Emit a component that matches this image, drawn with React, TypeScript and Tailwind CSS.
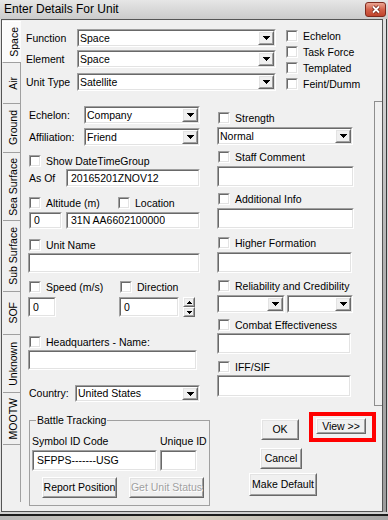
import React from "react"

type BoxProps = { className?: string; children?: React.ReactNode }

// sunken 3d edge, like a classic textbox
function Sunken({ className = "", children }: BoxProps) {
  return (
    <div className={`border border-t-[#a0a0a0] border-l-[#a0a0a0] border-b-white border-r-white ${className}`}>
      <div className="flex h-full w-full items-center overflow-hidden border border-t-[#696969] border-l-[#696969] border-b-[#e3e3e3] border-r-[#e3e3e3] bg-white">
        {children}
      </div>
    </div>
  )
}

// raised 3d edge, classic button
function Raised({ className = "", children }: BoxProps) {
  return (
    <div className={`shrink-0 border border-t-white border-l-white border-b-[#696969] border-r-[#696969] ${className}`}>
      <div className="flex h-full w-full items-center justify-center whitespace-nowrap border border-t-[#e3e3e3] border-l-[#e3e3e3] border-b-[#a0a0a0] border-r-[#a0a0a0] bg-[#f0f0f0]">
        {children}
      </div>
    </div>
  )
}

function Arrow() {
  return (
    <svg width="7" height="4" viewBox="0 0 7 4" shapeRendering="crispEdges">
      <path d="M0 0H7L3.5 4Z" fill="#000" />
    </svg>
  )
}

function Combo({ className = "", value = "" }: { className?: string; value?: string }) {
  return (
    <Sunken className={className}>
      <span className="min-w-0 flex-1 truncate pl-[1px]">{value}</span>
      <Raised className="h-full w-[16px]">
        <Arrow />
      </Raised>
    </Sunken>
  )
}

function TextBox({ className = "", value = "" }: { className?: string; value?: string }) {
  return (
    <Sunken className={className}>
      <span className="truncate pl-[3px]">{value}</span>
    </Sunken>
  )
}

function Check({ label, className = "" }: { label: string; className?: string }) {
  return (
    <div className={`flex h-[12px] items-center ${className}`}>
      <div className="h-[12px] w-[12px] shrink-0 border border-t-[#a0a0a0] border-l-[#a0a0a0] border-b-white border-r-white">
        <div className="h-full w-full border border-t-[#696969] border-l-[#696969] border-b-[#e3e3e3] border-r-[#e3e3e3] bg-white" />
      </div>
      <span className="ml-[5px] whitespace-nowrap">{label}</span>
    </div>
  )
}

const tabs = [
  { label: "Space", h: "h-[42px]", sel: true },
  { label: "Air", h: "h-[41px]" },
  { label: "Ground", h: "h-[49px]" },
  { label: "Sea Surface", h: "h-[68px]" },
  { label: "Sub Surface", h: "h-[71px]" },
  { label: "SOF", h: "h-[43px]" },
  { label: "Unknown", h: "h-[58px]" },
  { label: "MOOTW", h: "h-[52px]" },
]

export default function App() {
  return (
    <div className="h-[520px] w-[388px] overflow-hidden bg-[#d4d4d4] font-['Liberation_Sans',Arial,sans-serif] text-[10.5px] leading-[13px] text-black">

      {/* ===== title bar ===== */}
      <div className="flex h-[19px] items-center bg-linear-to-b from-[#e6e6e6] to-[#cbcbcb] pl-[4px]">
        <span className="text-[12px] leading-[15px]">Enter Details For Unit</span>
        <div className="ml-auto mr-[2px] flex h-[15px] w-[21px] items-center justify-center rounded-[3px] border border-[#7e2a1e] bg-linear-to-b from-[#eaa593] via-[#d3614a] to-[#c0432c]">
          <svg width="10" height="9" viewBox="0 0 10 9">
            <path d="M2 1.5L8 7.5M8 1.5L2 7.5" stroke="#6a2015" strokeWidth="3.4" />
            <path d="M2 1.5L8 7.5M8 1.5L2 7.5" stroke="#fff" strokeWidth="1.8" />
          </svg>
        </div>
      </div>

      <div className="flex h-[493px]">
        <div className="w-[1px] bg-[#e2e2e2]" />

        {/* ===== client area ===== */}
        <div className="flex w-[382px] border border-[#555] bg-[#f0f0f0]">

          {/* tab strip */}
          <div className="flex w-[19px] shrink-0 flex-col pt-[1px]">
            {tabs.map((t) => (
              <div
                key={t.label}
                className={`flex items-center justify-end ${t.h} ${
                  t.sel
                    ? "border-b border-l border-t border-b-[#a0a0a0] border-l-white border-t-white bg-[#fbfbfb]"
                    : "ml-[1px] border-b border-r border-[#a0a0a0]"
                }`}
              >
                <span className="rotate-180 whitespace-nowrap [writing-mode:vertical-rl]">{t.label}</span>
              </div>
            ))}
            <div className="h-[57px] border-r border-[#a0a0a0]" />
          </div>

          {/* page */}
          <div className="flex w-[361px] flex-col">

            {/* top section */}
            <div className="flex h-[80px] items-start">
              <div className="ml-[5px] mt-[9px] flex flex-col">
                <div className="flex h-[18px] items-center">
                  <span className="w-[51px]">Function</span>
                  <Combo className="h-[18px] w-[199px]" value="Space" />
                </div>
                <div className="mt-[3px] flex h-[18px] items-center">
                  <span className="w-[51px]">Element</span>
                  <Combo className="h-[18px] w-[199px]" value="Space" />
                </div>
                <div className="mt-[5px] flex h-[18px] items-center">
                  <span className="w-[51px]">Unit Type</span>
                  <Combo className="h-[18px] w-[199px]" value="Satellite" />
                </div>
              </div>
              <div className="ml-[10px] mt-[10px] flex flex-col gap-[4px]">
                <Check label="Echelon" />
                <Check label="Task Force" />
                <Check label="Templated" />
                <Check label="Feint/Dumm" />
              </div>
            </div>

            {/* lower section */}
            <div className="flex items-start">

              {/* left column */}
              <div className="ml-[8px] mt-[6px] flex w-[178px] shrink-0 flex-col">
                <div className="flex h-[18px] items-center">
                  <span className="w-[55px]">Echelon:</span>
                  <Combo className="h-[18px] w-[116px]" value="Company" />
                </div>
                <div className="mt-[4px] flex h-[18px] items-center">
                  <span className="w-[55px]">Affiliation:</span>
                  <Combo className="h-[18px] w-[116px]" value="Friend" />
                </div>
                <Check className="mt-[9px]" label="Show DateTimeGroup" />
                <div className="mt-[2px] flex h-[18px] items-center">
                  <span className="w-[37px]">As Of</span>
                  <TextBox className="h-[18px] w-[134px]" value="20165201ZNOV12" />
                </div>
                <div className="mt-[10px] flex">
                  <Check className="w-[89px]" label="Altitude (m)" />
                  <Check label="Location" />
                </div>
                <div className="mt-[3px] flex gap-[4px]">
                  <TextBox className="h-[17px] w-[33px]" value="0" />
                  <TextBox className="h-[17px] w-[134px]" value="31N AA6602100000" />
                </div>
                <Check className="mt-[10px]" label="Unit Name" />
                <TextBox className="-ml-[1px] mt-[2px] h-[20px] w-[172px]" />
                <div className="mt-[8px] flex">
                  <Check className="w-[91px]" label="Speed (m/s)" />
                  <Check label="Direction" />
                </div>
                <div className="-ml-[1px] mt-[4px] flex">
                  <TextBox className="h-[20px] w-[28px]" value="0" />
                  <TextBox className="ml-[63px] h-[20px] w-[60px]" value="0" />
                  <div className="ml-[4px] flex h-[20px] w-[12px] flex-col">
                    <Raised className="h-[10px] w-[12px]">
                      <svg width="5" height="3" viewBox="0 0 5 3" shapeRendering="crispEdges">
                        <path d="M2.5 0L5 3H0Z" fill="#000" />
                      </svg>
                    </Raised>
                    <Raised className="h-[10px] w-[12px]">
                      <svg width="5" height="3" viewBox="0 0 5 3" shapeRendering="crispEdges">
                        <path d="M0 0H5L2.5 3Z" fill="#000" />
                      </svg>
                    </Raised>
                  </div>
                </div>
                <Check className="mt-[19px]" label="Headquarters - Name:" />
                <TextBox className="-ml-[1px] mt-[2px] h-[20px] w-[169px]" />
                <div className="mt-[15px] flex h-[17px] items-center">
                  <span className="w-[46px]">Country:</span>
                  <Combo className="h-[17px] w-[125px]" value="United States" />
                </div>

                <fieldset className="mt-[12px] h-[92px] border border-[#a0a0a0] px-[2px]">
                  <legend className="ml-[4px] px-[1px]">Battle Tracking</legend>
                  <div className="mt-[8px] flex h-[13px]">
                    <span className="w-[128px]">Symbol ID Code</span>
                    <span className="whitespace-nowrap">Unique ID</span>
                  </div>
                  <div className="mt-[2px] flex">
                    <TextBox className="h-[21px] w-[125px]" value="SFPPS-------USG" />
                    <TextBox className="ml-[3px] h-[21px] w-[37px]" />
                  </div>
                  <div className="mt-[6px] flex">
                    <Raised className="ml-[10px] h-[21px] w-[75px]">Report Position</Raised>
                    <Raised className="ml-[12px] h-[21px] w-[75px]">
                      <span className="text-[#a0a0a0] [text-shadow:1px_1px_0_#fff]">Get Unit Status</span>
                    </Raised>
                  </div>
                </fieldset>
              </div>

              {/* right area */}
              <div className="ml-[10px] flex w-[165px] flex-col">
                <div className="flex items-start">
                  <div className="mt-[12px] flex w-[137px] shrink-0 flex-col">
                    <Check className="ml-[1px]" label="Strength" />
                    <Combo className="mt-[3px] h-[18px] w-[136px]" value="Normal" />
                    <Check className="ml-[1px] mt-[6px]" label="Staff Comment" />
                    <TextBox className="mt-[3px] h-[21px] w-[137px]" />
                    <Check className="ml-[1px] mt-[6px]" label="Additional Info" />
                    <TextBox className="mt-[3px] h-[21px] w-[137px]" />
                    <Check className="ml-[1px] mt-[8px]" label="Higher Formation" />
                    <TextBox className="mt-[3px] h-[21px] w-[135px]" />
                    <Check className="ml-[1px] mt-[7px]" label="Reliability and Credibility" />
                    <div className="mt-[3px] flex gap-[2px]">
                      <Combo className="h-[18px] w-[68px]" />
                      <Combo className="h-[18px] w-[66px]" />
                    </div>
                    <Check className="ml-[1px] mt-[6px]" label="Combat Effectiveness" />
                    <TextBox className="mt-[2px] h-[21px] w-[134px]" />
                    <Check className="ml-[1px] mt-[7px]" label="IFF/SIF" />
                    <TextBox className="mt-[2px] h-[22px] w-[134px]" />
                  </div>
                  <div className="ml-[20px] mt-[1px] h-[305px] w-[8px] border-b border-l border-t border-[#8e8e8e]" />
                </div>

                {/* buttons */}
                <div className="flex items-start">
                  <Raised className="ml-[44px] mt-[13px] h-[21px] w-[38px]">OK</Raised>
                  <div className="ml-[10px] mt-[6px] h-[30px] w-[67px] border-4 border-[#ff0000] pl-[3px] pt-[2px]">
                    <Raised className="h-[16px] w-[50px]">{"View >>"}</Raised>
                  </div>
                </div>
                <Raised className="ml-[43px] mt-[6px] h-[21px] w-[42px]">Cancel</Raised>
                <Raised className="ml-[32px] mt-[4px] h-[23px] w-[68px]">Make Default</Raised>
              </div>
            </div>
          </div>
        </div>

        {/* right window frame */}
        <div className="flex w-[5px]">
          <div className="w-[3px] bg-linear-to-b from-[#e0e0e0] via-[#b0b0b0] to-[#9c9c9c]" />
          <div className="w-[1px] bg-[#3a3a3a]" />
          <div className="w-[1px] bg-[#d8d8d8]" />
        </div>
      </div>

      {/* bottom window frame */}
      <div className="h-[2px] bg-[#d0d0d0]" />
      <div className="h-[2px] bg-[#1c1c1c]" />
      <div className="h-[4px] bg-linear-to-r from-[#b8b8b8] via-[#d8d2c2] to-[#a6a6a6]" />
    </div>
  )
}
